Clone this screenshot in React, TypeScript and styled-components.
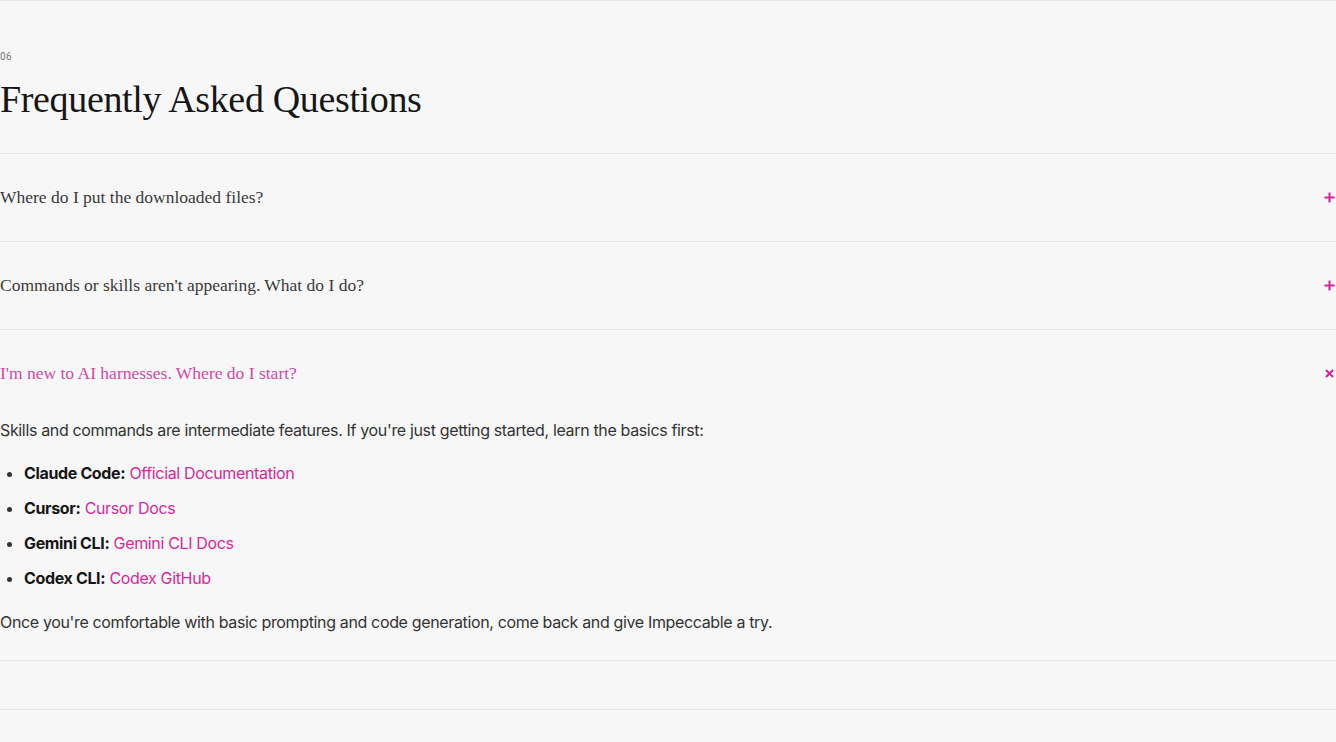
import React, { useState } from 'react';
import styled, { createGlobalStyle } from 'styled-components';

const GlobalStyle = createGlobalStyle`
  html, body {
    margin: 0;
    padding: 0;
    background: #f7f7f7;
  }
`;

const Section = styled.section`
  border-top: 1px solid #e6e6e6;
  padding-top: 50px;
`;

const Eyebrow = styled.div`
  font-family: 'Roboto', sans-serif;
  font-size: 10px;
  line-height: 12px;
  color: #7a7a7a;
  letter-spacing: 0.5px;
`;

const Title = styled.h2`
  margin: 12px 0 0;
  font-family: 'Liberation Serif', serif;
  font-weight: 400;
  font-size: 38px;
  line-height: 48px;
  color: #161616;
  letter-spacing: -0.35px;
  padding-bottom: 30px;
  border-bottom: 1px solid #e6e6e6;
`;

const Item = styled.div`
  border-bottom: 1px solid #e6e6e6;
`;

const QuestionRow = styled.button<{ $open: boolean }>`
  all: unset;
  box-sizing: border-box;
  display: flex;
  align-items: center;
  justify-content: space-between;
  width: 100%;
  height: 87px;
  cursor: pointer;
  font-family: 'Liberation Serif', serif;
  font-size: 17.5px;
  color: ${p => (p.$open ? '#cf4aa6' : '#3a3a3a')};
`;

const Icon = styled.svg`
  width: 11px;
  height: 11px;
  margin-right: 1px;
  flex-shrink: 0;
  stroke: #d4229c;
  stroke-width: 2;
  stroke-linecap: butt;
  fill: none;
`;

const Answer = styled.div`
  padding: 1px 0 26px;
  font-family: 'Inter', sans-serif;
  font-size: 16px;
  line-height: 24px;
  color: #333;
  letter-spacing: -0.35px;

  p {
    margin: 0;
  }
`;

const Links = styled.ul`
  margin: 19px 0 20px;
  padding-left: 24px;
  li {
    margin-top: 11px;
  }
  li:first-child {
    margin-top: 0;
  }
  strong {
    color: #151515;
    font-weight: 700;
  }
`;

const Link = styled.a`
  color: #d42a9c;
  text-decoration: none;
`;

const Spacer = styled.div`
  height: 48px;
  border-bottom: 1px solid #e6e6e6;
`;

const faqs = [
  { q: 'Where do I put the downloaded files?' },
  { q: "Commands or skills aren't appearing. What do I do?" },
  { q: "I'm new to AI harnesses. Where do I start?" },
];

const resources = [
  { name: 'Claude Code:', link: 'Official Documentation' },
  { name: 'Cursor:', link: 'Cursor Docs' },
  { name: 'Gemini CLI:', link: 'Gemini CLI Docs' },
  { name: 'Codex CLI:', link: 'Codex GitHub' },
];

const Toggle = ({ open }: { open: boolean }) => (
  <Icon viewBox="0 0 11 11">
    {open ? <path d="M2 2L9 9M9 2L2 9" /> : <path d="M5.5 0.5V10.5M0.5 5.5H10.5" />}
  </Icon>
);

function App() {
  const [open, setOpen] = useState(2);

  return (
    <>
      <GlobalStyle />
      <Section>
        <Eyebrow>06</Eyebrow>
        <Title>Frequently Asked Questions</Title>
        {faqs.map((f, i) => (
          <Item key={f.q}>
            <QuestionRow $open={open === i} onClick={() => setOpen(open === i ? -1 : i)}>
              {f.q}
              <Toggle open={open === i} />
            </QuestionRow>
            {open === i && i === 2 && (
              <Answer>
                <p>Skills and commands are intermediate features. If you're just getting started, learn the basics first:</p>
                <Links>
                  {resources.map(r => (
                    <li key={r.name}>
                      <strong>{r.name}</strong> <Link href="#">{r.link}</Link>
                    </li>
                  ))}
                </Links>
                <p>Once you're comfortable with basic prompting and code generation, come back and give Impeccable a try.</p>
              </Answer>
            )}
          </Item>
        ))}
        <Spacer />
      </Section>
    </>
  );
}

export default App;
